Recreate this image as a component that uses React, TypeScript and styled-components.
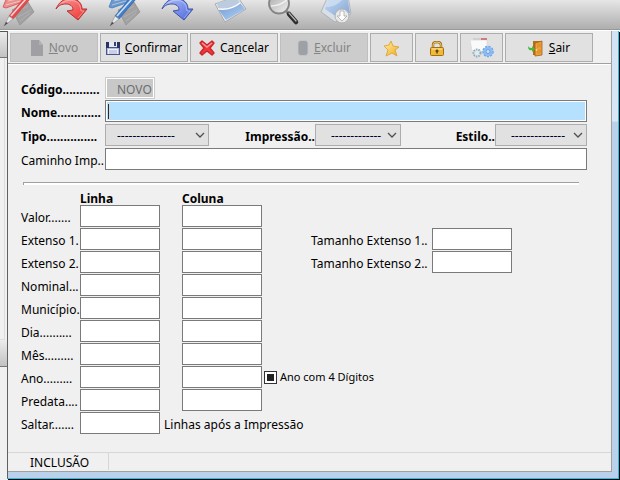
import React from "react";
import styled, { createGlobalStyle, css } from "styled-components";

const GlobalStyle = createGlobalStyle`
  *, *::before, *::after { box-sizing: border-box; }
  body { margin: 0; background: #f0f0f0; }
  body, button, input, select {
    font-family: "Noto Sans", "Open Sans", sans-serif;
    font-size: 12px;
    line-height: 16px;
    color: #000;
  }
`;

const Page = styled.div`
  display: flex;
  flex-direction: column;
  min-height: 100vh;
  overflow: hidden;
`;

const Ribbon = styled.header`
  display: flex;
  gap: 21px;
  height: 31px;
  padding-left: 2px;
  background: linear-gradient(#e6e6e6, #b0b0b0 28px);
  border-bottom: 1px solid #fff;
  box-shadow: inset 0 -1px 0 #989898;
`;

const RibbonButton = styled.button`
  width: 32px;
  height: 29px;
  padding: 0;
  border: 0;
  background: none;
  svg { display: block; }
`;

const Workspace = styled.div`
  flex: 1;
  display: flex;
`;

const SideRail = styled.aside`
  width: 7px;
  display: flex;
  flex-direction: column;
  background: #f0f0f0;
`;

const RailHandle = styled.div`
  height: 27px;
  background: linear-gradient(#ececec, #c2c2c2);
  border-bottom: 1px solid #777;
`;

const RailTop = styled(RailHandle)`
  border-top: 1px solid #555;
`;

const RailBody = styled.div`
  height: 282px;
  margin-right: 2px;
  border-right: 1px solid #dcdcdc;
  border-bottom: 1px solid #dcdcdc;
`;

const WindowFrame = styled.main`
  flex: 1;
  display: flex;
  flex-direction: column;
  padding: 0 6px 6px 0;
  background: linear-gradient(#d3e3f5, #d9e7f7 90px, #b9d1ea 91px);
  border-left: 1px solid #606060;
  border-right: 1px solid #20c4e8;
  border-bottom: 1px solid #20c4e8;
  box-shadow: 1px 1px 0 #000;
  margin: 0 1px 1px 0;
`;

const Panel = styled.div`
  flex: 1;
  display: flex;
  flex-direction: column;
  background: #f0f0f0;
  border-right: 1px solid #a0a0a0;
  border-bottom: 1px solid #a0a0a0;
`;

const Toolbar = styled.div`
  display: flex;
  gap: 2px;
  padding: 2px 2px 1px;
  border-bottom: 1px solid #a0a0a0;
  box-shadow: 0 1px 0 #fff;
`;

const ToolButton = styled.button<{ $small?: boolean }>`
  display: flex;
  align-items: center;
  justify-content: center;
  gap: 5px;
  width: ${(p) => (p.$small ? 43 : 88)}px;
  height: 29px;
  padding: 1px 0 0;
  background: #e1e1e1;
  border: 1px solid #adadad;
  &:disabled {
    background: #ccc;
    border-color: #bfbfbf;
    color: #838383;
  }
  svg { flex: none; }
`;

const Form = styled.form`
  flex: 1;
  padding: 13px 24px 18px 13px;
`;

const Row = styled.div<{ $gap?: number }>`
  display: flex;
  align-items: center;
  height: 22px;
  margin-bottom: ${(p) => p.$gap ?? 1}px;
`;

const SelectRow = styled.div`
  display: grid;
  grid-template-columns: 84px 104px 53fr 86px 47fr 92px;
  align-items: center;
  height: 22px;
  margin-bottom: 2px;
`;

const Label = styled.label<{ $w?: number; $bold?: boolean; $right?: boolean }>`
  flex: none;
  padding-top: 4px;
  white-space: nowrap;
  ${(p) => p.$w && css`width: ${p.$w}px;`}
  ${(p) => p.$bold && css`font-weight: 700;`}
  ${(p) => p.$right && css`text-align: right;`}
`;

const TextBox = styled.input<{ $w?: number; $active?: boolean }>`
  height: 22px;
  min-width: 0;
  padding: 0 3px;
  border: 1px solid #7a7a7a;
  border-radius: 0;
  outline: 0;
  background: #fff;
  ${(p) => (p.$w ? css`flex: none; width: ${p.$w}px;` : css`flex: 1;`)}
  ${(p) =>
    p.$active &&
    css`
      background:
        linear-gradient(#4a2010, #4a2010) 2px 3px / 1px 15px no-repeat,
        #b5e1ff;
      box-shadow: inset 0 0 0 1px #fff;
    `}
`;

const CodeBox = styled(TextBox)`
  padding: 2px 0 0 11px;
  border-color: #ccc;
  background: #c8c8c8;
  box-shadow: inset 0 0 0 1px #fff;
  color: #6d6d6d;
  opacity: 1;
`;

const Combo = styled.div`
  position: relative;
  height: 22px;
  svg {
    position: absolute;
    right: 4px;
    top: 8px;
    pointer-events: none;
  }
`;

const Select = styled.select<{ $indent: number }>`
  display: block;
  appearance: none;
  width: 100%;
  height: 22px;
  padding: 2px 18px 0 ${(p) => p.$indent}px;
  border: 1px solid #adadad;
  border-radius: 0;
  background: #e1e1e1;
  color: #000030;
`;

const Divider = styled.hr`
  height: 3px;
  margin: 12px 8px 6px 2px;
  border: 1px solid #a0a0a0;
  border-width: 1px 0 0 1px;
  background: #fff;
`;

const Headings = styled.div`
  display: grid;
  grid-template-columns: 102px 80px;
  height: 14px;
  margin-left: 59px;
  line-height: 16px;
  font-weight: 700;
`;

const ColumnBox = styled(TextBox)`
  margin-left: 22px;
`;

const SizeLabel = styled(Label)`
  width: 121px;
  margin-left: 49px;
`;

const After = styled(Label)`
  margin-left: 4px;
`;

const YearOption = styled.label`
  display: flex;
  align-items: center;
  gap: 3px;
  margin-left: 2px;
  font-size: 11px;
  white-space: nowrap;
`;

const SquareCheck = styled.input`
  appearance: none;
  width: 13px;
  height: 13px;
  margin: 0;
  border: 1px solid #333;
  background: #fff;
  &:checked {
    background: linear-gradient(#222, #222) center / 7px 7px no-repeat #fff;
  }
`;

const StatusBar = styled.footer`
  display: flex;
  height: 19px;
  padding-bottom: 1px;
  border-top: 1px solid #d7d7d7;
`;

const StatusCell = styled.div`
  width: 101px;
  padding: 2px 0 0 22px;
  border-right: 1px solid #d7d7d7;
`;

const Chevron = () => (
  <svg width="10" height="8" viewBox="0 0 10 8" fill="none" stroke="#505050" strokeWidth="1.3">
    <path d="M1 1l4 4 4-4" />
  </svg>
);

const PenPaper = ({ paper, tone, dark }: { paper: string; tone: string; dark: string }) => (
  <svg width="34" height="29" viewBox="0 0 34 29">
    <path d="M10 10l16-8 6 10-14 13z" fill="#a2a2a2" stroke="#8f8f8f" strokeWidth=".7" />
    <path d="M14 12l12-6M16 17l13-7M18 21l10-8" stroke="#b8b2b2" strokeWidth=".8" />
    <path d="M5-3L1 7l3 1 20-7 1-4z" fill={paper} stroke={tone} strokeWidth=".8" />
    <path d="M6 1l14-3M4 5l14-4" stroke="#fff" opacity=".45" />
    <path d="M7 16L22-2l6 1-17 20z" fill={tone} stroke={dark} strokeWidth=".7" />
    <path d="M9 16L24-1" stroke="#fff" strokeWidth="1.6" opacity=".75" />
    <path d="M2 26l5-10 4 3z" fill="#e8e8e8" stroke="#888" strokeWidth=".6" />
    <path d="M2 26l2-4 2 1z" fill="#444" />
  </svg>
);

const CurvedArrow = ({ a, b, edge }: { a: string; b: string; edge: string }) => (
  <svg width="34" height="29" viewBox="0 0 34 29">
    <defs>
      <linearGradient id={`arrow${a.slice(1)}`} x1="0" y1="0" x2="1" y2="1">
        <stop offset="0" stopColor={a} />
        <stop offset="1" stopColor={b} />
      </linearGradient>
    </defs>
    <path
      d="M1 9C4 2 9-2 16-1c8 0 11 5 11 10h5l-9 11-11-9 6-1c0-4-3-6-7-6C7 4 4 5 1 9z"
      fill={`url(#arrow${a.slice(1)})`}
      stroke={edge}
      strokeWidth="1"
    />
    <path d="M7 3c5-4 15-4 18 3l1 5h3l-6 7" fill="none" stroke="#fff" opacity=".35" />
  </svg>
);

const FolderIcon = () => (
  <svg width="34" height="29" viewBox="0 0 34 29">
    <defs>
      <linearGradient id="folder" x1="0" y1="0" x2="1" y2="1">
        <stop offset="0" stopColor="#6f9ad2" />
        <stop offset="1" stopColor="#b4d2f4" />
      </linearGradient>
    </defs>
    <path d="M1 4l22-8 9 13-21 13z" fill="#e3e6ea" stroke="#9a9fa6" strokeWidth=".8" />
    <path d="M3 3l19-6 4 6C18 9 11 9 4 8z" fill="#bccbdd" />
    <path d="M4 9c8 1 16-1 22-6l5 6-19 11z" fill="url(#folder)" />
    <path d="M4 9c8 1 16-1 22-6" fill="none" stroke="#fff" strokeWidth="1.2" />
  </svg>
);

const SearchIcon = () => (
  <svg width="34" height="29" viewBox="0 0 34 29">
    <defs>
      <linearGradient id="lens" x1="0" y1="0" x2="1" y2="1">
        <stop offset="0" stopColor="#a9a9a9" />
        <stop offset="1" stopColor="#f2f2f2" />
      </linearGradient>
    </defs>
    <path d="M19 11l4 4" stroke="#888" strokeWidth="3" />
    <path d="M22 14l7 8" stroke="#2e2e2e" strokeWidth="4.500" strokeLinecap="round" />
    <path d="M22 13l7 8" stroke="#b5b5b5" strokeWidth="1.200" strokeLinecap="round" />
    <circle cx="12" cy="3.500" r="10" fill="url(#lens)" stroke="#858585" strokeWidth="1.800" />
    <path d="M4 6c6 0 11-2 16-6" fill="none" stroke="#fff" strokeWidth="1.500" opacity=".7" />
  </svg>
);

const DownloadIcon = () => (
  <svg width="34" height="29" viewBox="0 0 34 29">
    <defs>
      <linearGradient id="sheet" x1="0" y1="0" x2="1" y2="1">
        <stop offset="0" stopColor="#c9dbef" />
        <stop offset="1" stopColor="#7fa5d8" />
      </linearGradient>
    </defs>
    <path d="M8-4L1 12l14 10 16-8L28-4z" fill="#d9dfe6" stroke="#a5abb3" strokeWidth=".8" />
    <path d="M10-4L5 9l12 8 13-4-3-17z" fill="url(#sheet)" />
    <path d="M10-4L6 7C14 7 21 3 25-4z" fill="#d3e2f3" opacity=".7" />
    <circle cx="22" cy="16" r="7" fill="#e9e9e9" stroke="#b0b0b0" />
    <path d="M20 11h4v5h3l-5 5-5-5h3z" fill="#fff" stroke="#aaa" strokeWidth=".8" />
  </svg>
);

const PageIcon = () => (
  <svg width="14" height="16" viewBox="0 0 14 16">
    <path d="M1 0h8l4 5v11H1z" fill="#a0a0a4" />
    <path d="M9 0v5h4z" fill="#b0b0b4" />
  </svg>
);

const SaveIcon = () => (
  <svg width="14" height="14" viewBox="0 0 14 14">
    <path d="M0 1h12l2 2v11H0z" fill="#4a568c" />
    <path d="M0 1h3v6H0zM11 1h3v6h-3z" fill="#2a3363" />
    <path d="M3 1h8v5H3z" fill="#e6e9f5" />
    <path d="M8 1h2v4H8z" fill="#35456f" />
    <path d="M1 7h12v6H1z" fill="#b4bbda" />
    <path d="M2 8h10v5H2z" fill="#edf0fa" />
    <path d="M3 10h8M3 12h8" stroke="#a5b0d0" />
  </svg>
);

const CrossIcon = () => (
  <svg width="16" height="16" viewBox="0 0 16 16">
    <path
      d="M3 1l5 4 5-4 2 2-4 5 4 5-2 2-5-4-5 4-2-2 4-5-4-5z"
      fill="#f0383c"
      stroke="#c9252d"
      strokeWidth="1.400"
      strokeLinejoin="round"
    />
    <path d="M3 3l5 4 5-4" fill="none" stroke="#ff9797" strokeWidth="1.4" />
  </svg>
);

const BinIcon = () => (
  <svg width="12" height="16" viewBox="0 0 12 16">
    <rect x="1" y=".5" width="10" height="15" rx="3" fill="#a0a0a4" stroke="#b9cccf" strokeWidth=".8" />
  </svg>
);

const StarIcon = () => (
  <svg width="17" height="17" viewBox="0 0 17 17">
    <defs>
      <linearGradient id="gold" x1="0" y1="0" x2="1" y2="1">
        <stop offset="0" stopColor="#fff2a5" />
        <stop offset="1" stopColor="#f2a91c" />
      </linearGradient>
    </defs>
    <path
      d="M8 1l2 5 6 1-4 3 2 6-5-3-6 3 2-6-4-4 5-1z"
      fill="url(#gold)"
      stroke="#e0a13a"
      strokeWidth=".9"
      strokeLinejoin="round"
    />
  </svg>
);

const LockIcon = () => (
  <svg width="14" height="15" viewBox="0 0 14 15">
    <path d="M3 7V4q0-3 4-3t4 3v3" fill="none" stroke="#9b6b12" strokeWidth="2.4" />
    <path d="M3 7V4q0-3 4-3t4 3v3" fill="none" stroke="#f3cf70" strokeWidth="1" />
    <rect x=".5" y="6.500" width="13" height="8" rx="1" fill="#f0b93a" stroke="#a36f12" />
    <path d="M2 8h10" stroke="#ffe7a0" />
    <path d="M7 8.500v4M5.500 10h3" stroke="#5a3c08" strokeWidth="1.400" />
  </svg>
);

const SettingsIcon = () => (
  <svg width="24" height="20" viewBox="0 0 24 20">
    <path d="M0 2h17v11H2z" fill="#fafafa" stroke="#dadada" strokeWidth=".8" />
    <path d="M3 1h14" stroke="#d0d0d0" strokeWidth="2" />
    <path d="M11 1h6" stroke="#d35454" strokeWidth="1.400" />
    <circle cx="7" cy="15" r="3.500" fill="#e0e9ee" stroke="#8fabb9" strokeWidth="2" strokeDasharray="1.500 1" />
    <circle cx="18" cy="13.500" r="4.500" fill="#88b9f2" stroke="#68a4ea" strokeWidth="2.500" strokeDasharray="2 1" />
    <circle cx="18" cy="13.500" r="4.500" fill="#8fbdf3" />
    <circle cx="18" cy="13.500" r="2" fill="#c9e0fa" stroke="#5d98e0" strokeWidth=".8" />
  </svg>
);

const DoorIcon = () => (
  <svg width="16" height="17" viewBox="0 0 16 17">
    <path d="M5 1h9v14H5z" fill="#b56e1d" />
    <path d="M7 3l7-2v14l-7 1z" fill="#eda13b" stroke="#a35f14" strokeWidth=".8" />
    <path d="M9 4l4-1v4l-4 1zM9 10l4-1v4l-4 1z" fill="#e2932f" />
    <circle cx="8.500" cy="10" r=".8" fill="#fff0a0" />
    <path d="M0 6c1 2 3 2 4 2V6l3 3-3 3v-2C1 11 0 9 0 6z" fill="#44bb3d" />
  </svg>
);

const RIBBON: { name: string; icon: React.ReactNode }[] = [
  { name: "Editar", icon: <PenPaper paper="#e88f8f" tone="#e6494b" dark="#c44" /> },
  { name: "Retornar", icon: <CurvedArrow a="#ff9a9a" b="#e8322f" edge="#b93030" /> },
  { name: "Escrever", icon: <PenPaper paper="#6c97c8" tone="#3f7fce" dark="#2f5f9f" /> },
  { name: "Avançar", icon: <CurvedArrow a="#b3c0fa" b="#4967dc" edge="#3d52a8" /> },
  { name: "Abrir", icon: <FolderIcon /> },
  { name: "Procurar", icon: <SearchIcon /> },
  { name: "Baixar", icon: <DownloadIcon /> },
];

const LINES: { id: string; label: string }[] = [
  { id: "valor", label: "Valor......." },
  { id: "extenso1", label: "Extenso 1." },
  { id: "extenso2", label: "Extenso 2." },
  { id: "nominal", label: "Nominal..." },
  { id: "municipio", label: "Município.." },
  { id: "dia", label: "Dia.........." },
  { id: "mes", label: "Mês........." },
  { id: "ano", label: "Ano........." },
  { id: "predata", label: "Predata...." },
];

const SIZES: Record<string, string> = {
  extenso1: "Tamanho Extenso 1..",
  extenso2: "Tamanho Extenso 2..",
};

const ComboBox = ({ id, dashes, indent }: { id: string; dashes: number; indent: number }) => (
  <Combo>
    <Select id={id} $indent={indent}>
      <option>{"-".repeat(dashes)}</option>
    </Select>
    <Chevron />
  </Combo>
);

export default function App() {
  return (
    <Page>
      <GlobalStyle />
      <Ribbon>
        {RIBBON.map((item) => (
          <RibbonButton key={item.name} type="button" aria-label={item.name}>
            {item.icon}
          </RibbonButton>
        ))}
      </Ribbon>
      <Workspace>
        <SideRail>
          <RailTop />
          <RailBody />
          <RailHandle />
        </SideRail>
        <WindowFrame>
          <Panel>
            <Toolbar>
              <ToolButton disabled><PageIcon /><span><u>N</u>ovo</span></ToolButton>
              <ToolButton><SaveIcon /><span><u>C</u>onfirmar</span></ToolButton>
              <ToolButton><CrossIcon /><span>Ca<u>n</u>celar</span></ToolButton>
              <ToolButton disabled><BinIcon /><span><u>E</u>xcluir</span></ToolButton>
              <ToolButton $small aria-label="Favorito"><StarIcon /></ToolButton>
              <ToolButton $small aria-label="Bloquear"><LockIcon /></ToolButton>
              <ToolButton $small aria-label="Configurar"><SettingsIcon /></ToolButton>
              <ToolButton><DoorIcon /><span><u>S</u>air</span></ToolButton>
            </Toolbar>
            <Form>
              <Row>
                <Label htmlFor="codigo" $w={84} $bold>Código...........</Label>
                <CodeBox id="codigo" $w={50} defaultValue="NOVO" disabled />
              </Row>
              <Row $gap={2}>
                <Label htmlFor="nome" $w={84} $bold>Nome.............</Label>
                <TextBox id="nome" $active />
              </Row>
              <SelectRow>
                <Label htmlFor="tipo" $bold>Tipo...............</Label>
                <ComboBox id="tipo" dashes={15} indent={11} />
                <Label htmlFor="impressao" $bold $right>Impressão..</Label>
                <ComboBox id="impressao" dashes={13} indent={15} />
                <Label htmlFor="estilo" $bold $right>Estilo..</Label>
                <ComboBox id="estilo" dashes={14} indent={15} />
              </SelectRow>
              <Row $gap={0}>
                <Label htmlFor="caminho" $w={84}>Caminho Imp..</Label>
                <TextBox id="caminho" />
              </Row>
              <Divider />
              <Headings><span>Linha</span><span>Coluna</span></Headings>
              {LINES.map(({ id, label }) => (
                <Row key={id}>
                  <Label htmlFor={id} $w={59}>{label}</Label>
                  <TextBox id={id} $w={80} />
                  <ColumnBox aria-label={`${id} coluna`} $w={80} />
                  {SIZES[id] && (
                    <>
                      <SizeLabel htmlFor={`${id}-tamanho`}>{SIZES[id]}</SizeLabel>
                      <TextBox id={`${id}-tamanho`} $w={80} />
                    </>
                  )}
                  {id === "ano" && (
                    <YearOption>
                      <SquareCheck type="checkbox" defaultChecked />
                      Ano com 4 Dígitos
                    </YearOption>
                  )}
                </Row>
              ))}
              <Row $gap={0}>
                <Label htmlFor="saltar" $w={59}>Saltar.......</Label>
                <TextBox id="saltar" $w={80} />
                <After htmlFor="saltar">Linhas após a Impressão</After>
              </Row>
            </Form>
            <StatusBar>
              <StatusCell>INCLUSÃO</StatusCell>
            </StatusBar>
          </Panel>
        </WindowFrame>
      </Workspace>
    </Page>
  );
}
